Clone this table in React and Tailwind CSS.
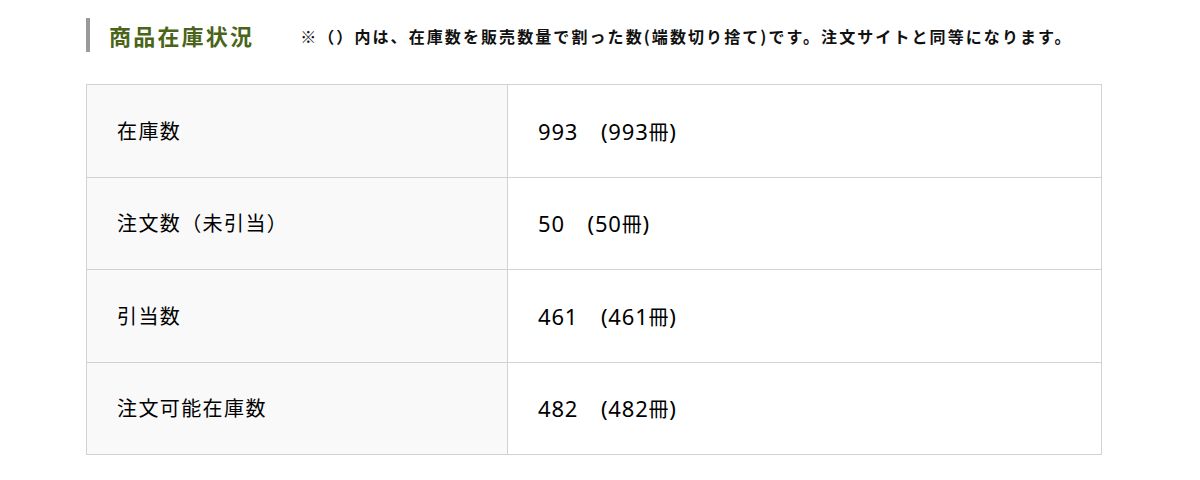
export default function App() {
  const rows = [
    ["在庫数", "993", "993"],
    ["注文数（未引当）", "50", "50"],
    ["引当数", "461", "461"],
    ["注文可能在庫数", "482", "482"],
  ];
  const font = { fontFamily: '"Noto Sans CJK JP", "Noto Sans", sans-serif' };
  const latin = { fontFamily: '"Noto Sans", "Noto Sans CJK JP", sans-serif' };
  return (
    <div className="w-[1200px] h-[480px] bg-white" style={font}>
      <div className="pl-[86px] pt-[18px]">
        <div className="flex items-center h-[34px]">
          <div className="w-[4px] h-[34px] bg-[#9a9a9a]" />
          <h2 className="ml-[19px] text-[22px] font-bold tracking-[0.1em] text-[#4a6419] leading-none">
            商品在庫状況
          </h2>
          <p className="ml-[46px] text-[16px] font-bold tracking-[0.13em] text-[#111] leading-none mt-[2px]">
            ※（）内は、在庫数を販売数量で割った数(端数切り捨て)です。注文サイトと同等になります。
          </p>
        </div>
        <table className="mt-[32px] w-[1016px] border-collapse text-black">
          <tbody>
            {rows.map(([label, n, b]) => (
              <tr key={label} className="h-[92.5px]">
                <td className="w-[421px] border border-[#d2d2d2] bg-[#f9f9f9] pl-[30px] align-middle text-[20px] tracking-[1.4px] leading-none">
                  {label}
                </td>
                <td className="border border-[#d2d2d2] bg-white pl-[30px] align-middle text-[22px] tracking-[0.8px] leading-none" style={latin}>
                  {n}　({b}<span className="text-[20px]" style={font}>冊</span>)
                </td>
              </tr>
            ))}
          </tbody>
        </table>
      </div>
    </div>
  );
}
